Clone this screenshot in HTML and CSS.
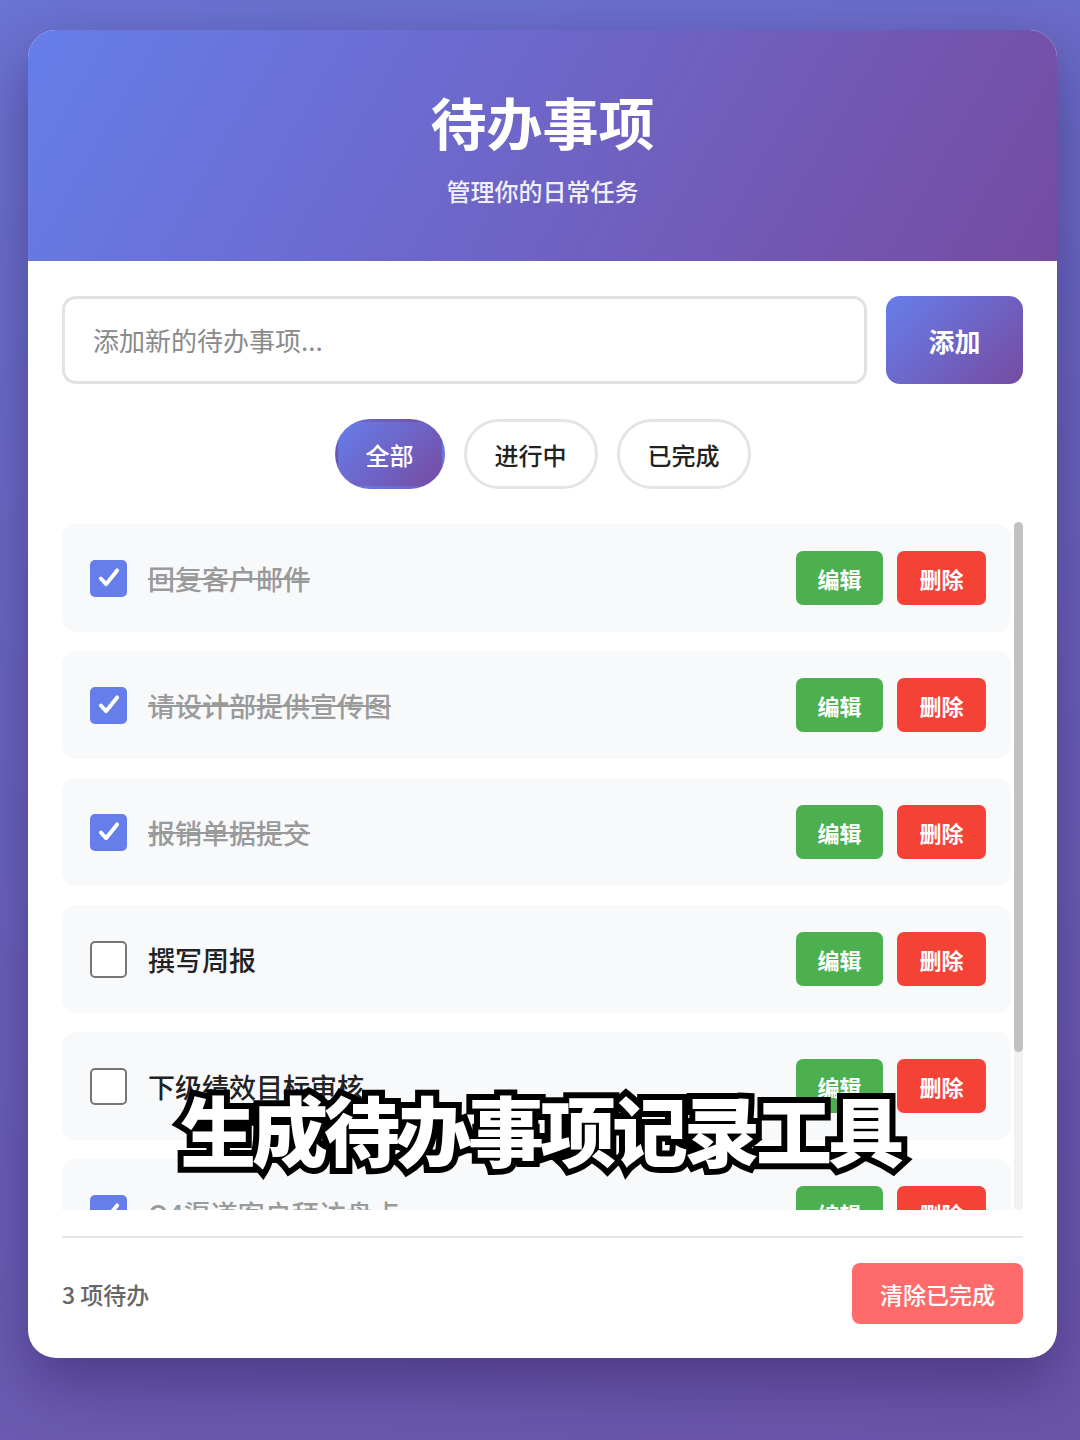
FILE: index.html
```html
<!DOCTYPE html>
<html lang="zh-CN">

<head>
    <meta charset="UTF-8">
    <meta name="viewport" content="width=device-width, initial-scale=1.0">
    <title>待办事项</title>
    <link rel="stylesheet" href="styles.css">
</head>

<body>
    <div class="app">
        <div class="header">
            <h1 class="title">待办事项</h1>
            <p class="subtitle">管理你的日常任务</p>
        </div>
        <div class="content">
            <div class="add-row">
                <div class="todo-input">添加新的待办事项...</div>
                <button class="add-button">添加</button>
            </div>
            <div class="filters">
                <button class="filter active">全部</button>
                <button class="filter">进行中</button>
                <button class="filter">已完成</button>
            </div>
            <div class="list-wrap">
                <ul class="todo-list">
                    <li class="todo-item done">
                        <span class="check checked">
                            <svg width="26" height="26" viewBox="0 0 24 24"><path d="M4.5 12.5l4.8 5.2L19.5 5" /></svg>
                        </span>
                        <span class="todo-text">回复客户邮件</span>
                        <button class="item-button edit">编辑</button>
                        <button class="item-button delete">删除</button>
                    </li>
                    <li class="todo-item done">
                        <span class="check checked">
                            <svg width="26" height="26" viewBox="0 0 24 24"><path d="M4.5 12.5l4.8 5.2L19.5 5" /></svg>
                        </span>
                        <span class="todo-text">请设计部提供宣传图</span>
                        <button class="item-button edit">编辑</button>
                        <button class="item-button delete">删除</button>
                    </li>
                    <li class="todo-item done">
                        <span class="check checked">
                            <svg width="26" height="26" viewBox="0 0 24 24"><path d="M4.5 12.5l4.8 5.2L19.5 5" /></svg>
                        </span>
                        <span class="todo-text">报销单据提交</span>
                        <button class="item-button edit">编辑</button>
                        <button class="item-button delete">删除</button>
                    </li>
                    <li class="todo-item">
                        <span class="check"></span>
                        <span class="todo-text">撰写周报</span>
                        <button class="item-button edit">编辑</button>
                        <button class="item-button delete">删除</button>
                    </li>
                    <li class="todo-item">
                        <span class="check"></span>
                        <span class="todo-text">下级绩效目标审核</span>
                        <button class="item-button edit">编辑</button>
                        <button class="item-button delete">删除</button>
                    </li>
                    <li class="todo-item done">
                        <span class="check checked">
                            <svg width="26" height="26" viewBox="0 0 24 24"><path d="M4.5 12.5l4.8 5.2L19.5 5" /></svg>
                        </span>
                        <span class="todo-text">Q4渠道客户拜访盘点</span>
                        <button class="item-button edit">编辑</button>
                        <button class="item-button delete">删除</button>
                    </li>
                    <li class="todo-item">
                        <span class="check"></span>
                        <span class="todo-text">整理会议纪要</span>
                        <button class="item-button edit">编辑</button>
                        <button class="item-button delete">删除</button>
                    </li>
                </ul>
                <div class="scrollbar"><div class="scroll-thumb"></div></div>
            </div>
            <div class="footer">
                <span class="count">3 项待办</span>
                <button class="clear-button">清除已完成</button>
            </div>
        </div>
    </div>
    <div class="caption">生成待办事项记录工具</div>
</body>

</html>
```

FILE: styles.css
```css
* {
    box-sizing: border-box;
}

body {
    margin: 0;
    padding: 30px 23px 0 28px;
    min-height: 1440px;
    background: linear-gradient(160deg, #6a74d2 0%, #6a62bd 50%, #6a55a8 100%);
    font-family: "Noto Sans CJK SC", "Noto Sans", sans-serif;
    position: relative;
}

.app {
    background: #ffffff;
    border-radius: 28px;
    overflow: hidden;
    box-shadow: 0 24px 60px rgba(40, 20, 80, 0.45);
}

.header {
    background: linear-gradient(120deg, #667eea 0%, #764ba2 100%);
    color: #ffffff;
    text-align: center;
    padding: 57px 0 53px;
}

.title {
    margin: 0;
    font-size: 56px;
    font-weight: 700;
    line-height: 67px;
}

.subtitle {
    margin: 20px 0 0;
    font-size: 24px;
    font-weight: 500;
    line-height: 34px;
    opacity: 0.9;
}

.content {
    padding: 35px 34px 34px;
}

.add-row {
    display: flex;
    gap: 19px;
}

.todo-input {
    flex: 1;
    height: 88px;
    border: 3px solid #e2e2e2;
    border-radius: 14px;
    padding: 0 28px;
    font-size: 26px;
    line-height: 82px;
    color: #8a8a8a;
}

.add-button {
    width: 137px;
    height: 88px;
    border: none;
    border-radius: 14px;
    background: linear-gradient(135deg, #667eea 0%, #764ba2 100%);
    color: #ffffff;
    font-family: inherit;
    font-size: 26px;
    font-weight: 700;
}

.filters {
    display: flex;
    justify-content: center;
    gap: 19px;
    margin-top: 35px;
}

.filter {
    height: 70px;
    padding: 0 28px;
    border: 3px solid #e4e4e4;
    border-radius: 35px;
    background: #ffffff;
    color: #222222;
    font-family: inherit;
    font-size: 24px;
    font-weight: 500;
}

.filter.active {
    border-color: transparent;
    background: linear-gradient(135deg, #667eea 0%, #764ba2 100%);
    color: #ffffff;
}

.list-wrap {
    position: relative;
    margin-top: 33px;
    padding-right: 12px;
}

.todo-list {
    list-style: none;
    margin: 0;
    padding: 2px 0 0;
    height: 688px;
    overflow: hidden;
    display: flex;
    flex-direction: column;
    gap: 19px;
}

.scrollbar {
    position: absolute;
    top: 0;
    right: 0;
    width: 9px;
    height: 688px;
    background: #f1f1f1;
    border-radius: 5px;
}

.scroll-thumb {
    height: 530px;
    background: #c1c1c1;
    border-radius: 5px;
}

.todo-item {
    flex-shrink: 0;
    display: flex;
    align-items: center;
    height: 108px;
    padding: 0 25px 0 28px;
    background: #f8f9fa;
    border-radius: 14px;
}

.check {
    width: 37px;
    height: 37px;
    flex-shrink: 0;
    border: 2px solid #767676;
    border-radius: 5px;
    background: #ffffff;
    display: flex;
    align-items: center;
    justify-content: center;
}

.check.checked {
    border: none;
    background: #667eea;
}

.check svg path {
    fill: none;
    stroke: #ffffff;
    stroke-width: 3.6;
    stroke-linecap: round;
    stroke-linejoin: round;
}

.todo-text {
    flex: 1;
    margin-left: 21px;
    font-size: 27px;
    font-weight: 500;
    color: #222222;
    white-space: nowrap;
}

.done .todo-text {
    color: #9a9a9a;
    text-decoration: line-through;
}

.item-button {
    height: 54px;
    border: none;
    border-radius: 7px;
    color: #ffffff;
    font-family: inherit;
    font-size: 22px;
    font-weight: 700;
}

.item-button.edit {
    width: 87px;
    background: #4caf50;
}

.item-button.delete {
    width: 89px;
    margin-left: 14px;
    background: #f44336;
}

.footer {
    display: flex;
    align-items: center;
    justify-content: space-between;
    margin-top: 26px;
    padding-top: 25px;
    border-top: 2px solid #e6e6e6;
}

.count {
    font-size: 23px;
    font-weight: 500;
    color: #666666;
}

.clear-button {
    width: 171px;
    height: 61px;
    border: none;
    border-radius: 8px;
    background: #ff6b6b;
    color: #ffffff;
    font-family: inherit;
    font-size: 23px;
    font-weight: 500;
}

.caption {
    position: absolute;
    left: 0;
    right: 0;
    top: 1080px;
    text-align: center;
    font-size: 76px;
    font-weight: 900;
    line-height: 96px;
    letter-spacing: -4px;
    color: #ffffff;
    -webkit-text-stroke: 12px #000000;
    paint-order: stroke fill;
}
```
